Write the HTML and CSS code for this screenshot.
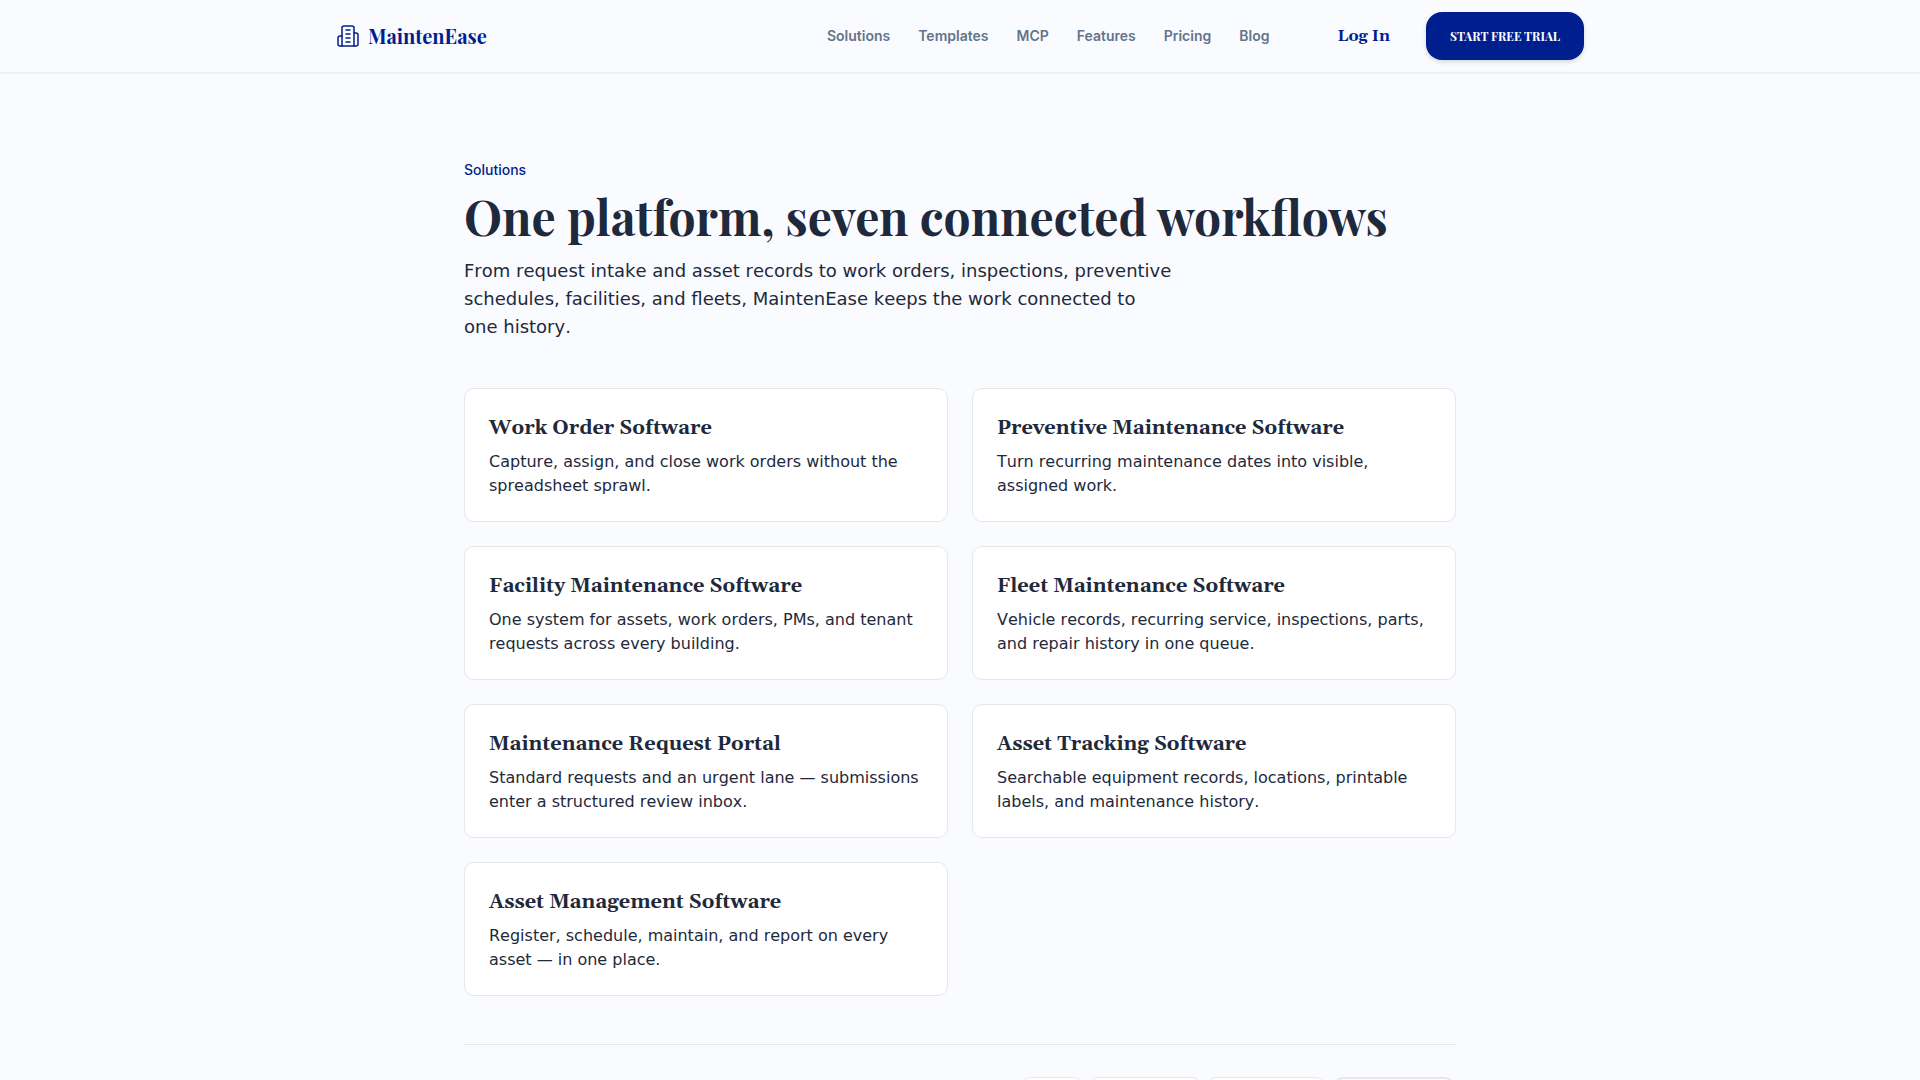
FILE: index.html
```
<!DOCTYPE html>
<html lang="en">
<head>
  <meta charset="UTF-8">
  <meta name="viewport" content="width=device-width, initial-scale=1.0">
  <title>Solutions | MaintenEase</title>
  <link rel="stylesheet" href="styles.css">
</head>
<body>

  <header class="site-header">
    <div class="header-inner">
      <a class="brand" href="#">
        <svg class="brand-icon" viewBox="0 0 24 24" fill="none" stroke="currentColor" stroke-width="1.5" stroke-linecap="round" stroke-linejoin="round" aria-hidden="true">
          <path d="M6 22V4a2 2 0 0 1 2-2h8a2 2 0 0 1 2 2v18Z"/>
          <path d="M6 12H4a2 2 0 0 0-2 2v6a2 2 0 0 0 2 2h2"/>
          <path d="M18 9h2a2 2 0 0 1 2 2v9a2 2 0 0 1-2 2h-2"/>
          <path d="M10 6h4"/>
          <path d="M10 10h4"/>
          <path d="M10 14h4"/>
          <path d="M10 18h4"/>
        </svg>
        <span>MaintenEase</span>
      </a>

      <div class="header-right">
        <nav class="main-nav">
          <a href="#">Solutions</a>
          <a href="#">Templates</a>
          <a href="#">MCP</a>
          <a href="#">Features</a>
          <a href="#">Pricing</a>
          <a href="#">Blog</a>
        </nav>
        <div class="header-actions">
          <a class="login" href="#">Log In</a>
          <a class="trial" href="#">START FREE TRIAL</a>
        </div>
      </div>
    </div>
  </header>

  <main class="page">
    <p class="eyebrow">Solutions</p>
    <h1>One platform, seven connected workflows</h1>
    <p class="intro">From request intake and asset records to work orders, inspections, preventive schedules, facilities, and fleets, MaintenEase keeps the work connected to one&nbsp;history.</p>

    <div class="cards">
      <a class="card" href="#">
        <h2>Work Order Software</h2>
        <p>Capture, assign, and close work orders without the spreadsheet sprawl.</p>
      </a>
      <a class="card" href="#">
        <h2>Preventive Maintenance Software</h2>
        <p>Turn recurring maintenance dates into visible, assigned work.</p>
      </a>
      <a class="card" href="#">
        <h2>Facility Maintenance Software</h2>
        <p>One system for assets, work orders, PMs, and tenant requests across every building.</p>
      </a>
      <a class="card" href="#">
        <h2>Fleet Maintenance Software</h2>
        <p>Vehicle records, recurring service, inspections, parts, and repair history in one queue.</p>
      </a>
      <a class="card" href="#">
        <h2>Maintenance Request Portal</h2>
        <p>Standard requests and an urgent lane — submissions enter a structured review inbox.</p>
      </a>
      <a class="card" href="#">
        <h2>Asset Tracking Software</h2>
        <p>Searchable equipment records, locations, printable labels, and maintenance history.</p>
      </a>
      <a class="card" href="#">
        <h2>Asset Management Software</h2>
        <p>Register, schedule, maintain, and report on every asset — in one place.</p>
      </a>
    </div>

    <div class="share">
      <span class="pill pill-small"></span>
      <span class="pill pill-medium"></span>
      <span class="pill pill-large"></span>
      <span class="pill pill-strong"></span>
    </div>
  </main>

</body>
</html>
```
FILE: styles.css
```
* {
  box-sizing: border-box;
}

html {
  height: 100%;
  overflow: hidden;
}

body {
  margin: 0;
  height: 100%;
  overflow: hidden;
  background: #fafbff;
  color: #1e293b;
  font-family: Verdana, "DejaVu Sans", sans-serif;
  font-size: 16px;
  line-height: 24px;
}

a {
  color: inherit;
  text-decoration: none;
}

.site-header {
  border-bottom: 1px solid #eceef2;
  box-shadow: 0 1px 2px rgba(0, 0, 0, 0.03);
}

.header-inner {
  display: flex;
  justify-content: space-between;
  align-items: center;
  max-width: 1280px;
  margin: 0 auto;
  padding: 12px 16px;
}

.brand {
  display: flex;
  align-items: center;
  gap: 8px;
  color: #001f8f;
  font-family: "Playfair Display", "Liberation Serif", serif;
  font-size: 20px;
  font-weight: 700;
}

.brand-icon {
  width: 24px;
  height: 24px;
}

.header-right,
.header-actions {
  display: flex;
  align-items: center;
}

.header-right {
  gap: 68px;
}

.header-actions {
  gap: 36px;
}

.main-nav {
  display: flex;
  gap: 28px;
  color: #64748b;
  font-family: Inter, sans-serif;
  font-size: 14px;
  font-weight: 600;
}

.login {
  color: #001f8f;
  font-family: Gelasio, Georgia, "Noto Serif", "Liberation Serif", serif;
  font-weight: 700;
}

.trial {
  padding: 12px 24px;
  border-radius: 16px;
  background: #001f8f;
  box-shadow: 0 2px 4px rgba(0, 0, 0, 0.15);
  color: #fff;
  font-family: "Playfair Display", "Liberation Serif", serif;
  font-size: 12px;
  font-weight: 700;
}

.page {
  max-width: 1024px;
  margin: 0 auto;
  padding: 86px 16px 0;
}

.eyebrow {
  margin: 0;
  color: #001f8f;
  font-family: Inter, sans-serif;
  font-size: 14px;
  font-weight: 500;
  line-height: 22px;
}

h1 {
  margin: 6px 0 12px;
  font-family: "Playfair Display", "Liberation Serif", serif;
  font-size: 48px;
  font-weight: 700;
  line-height: 58px;
}

.intro {
  max-width: 720px;
  margin: 0 0 47px;
  font-size: 18px;
  font-kerning: none;
  line-height: 28px;
}

.cards {
  display: grid;
  grid-template-columns: 1fr 1fr;
  gap: 24px;
}

.card {
  padding: 25px 24px 23px;
  border: 1px solid #e5e7eb;
  border-radius: 10px;
  background: #fff;
}

.card h2 {
  margin: 0 0 8px;
  font-family: Gelasio, Georgia, "Noto Serif", "Liberation Serif", serif;
  font-size: 20px;
  font-weight: 700;
  line-height: 28px;
}

.card p {
  margin: 0;
  font-kerning: none;
}

.share {
  display: flex;
  justify-content: flex-end;
  gap: 8px;
  margin-top: 48px;
  padding-top: 32px;
  border-top: 1px solid #e5e7eb;
}

.pill {
  height: 40px;
  border: 1px solid #e5e7eb;
  border-radius: 8px;
  background: #fff;
}

.pill-small {
  width: 60px;
}

.pill-medium {
  width: 110px;
}

.pill-large {
  width: 116px;
}

.pill-strong {
  width: 124px;
  border-width: 2px;
  border-radius: 12px;
}
```
